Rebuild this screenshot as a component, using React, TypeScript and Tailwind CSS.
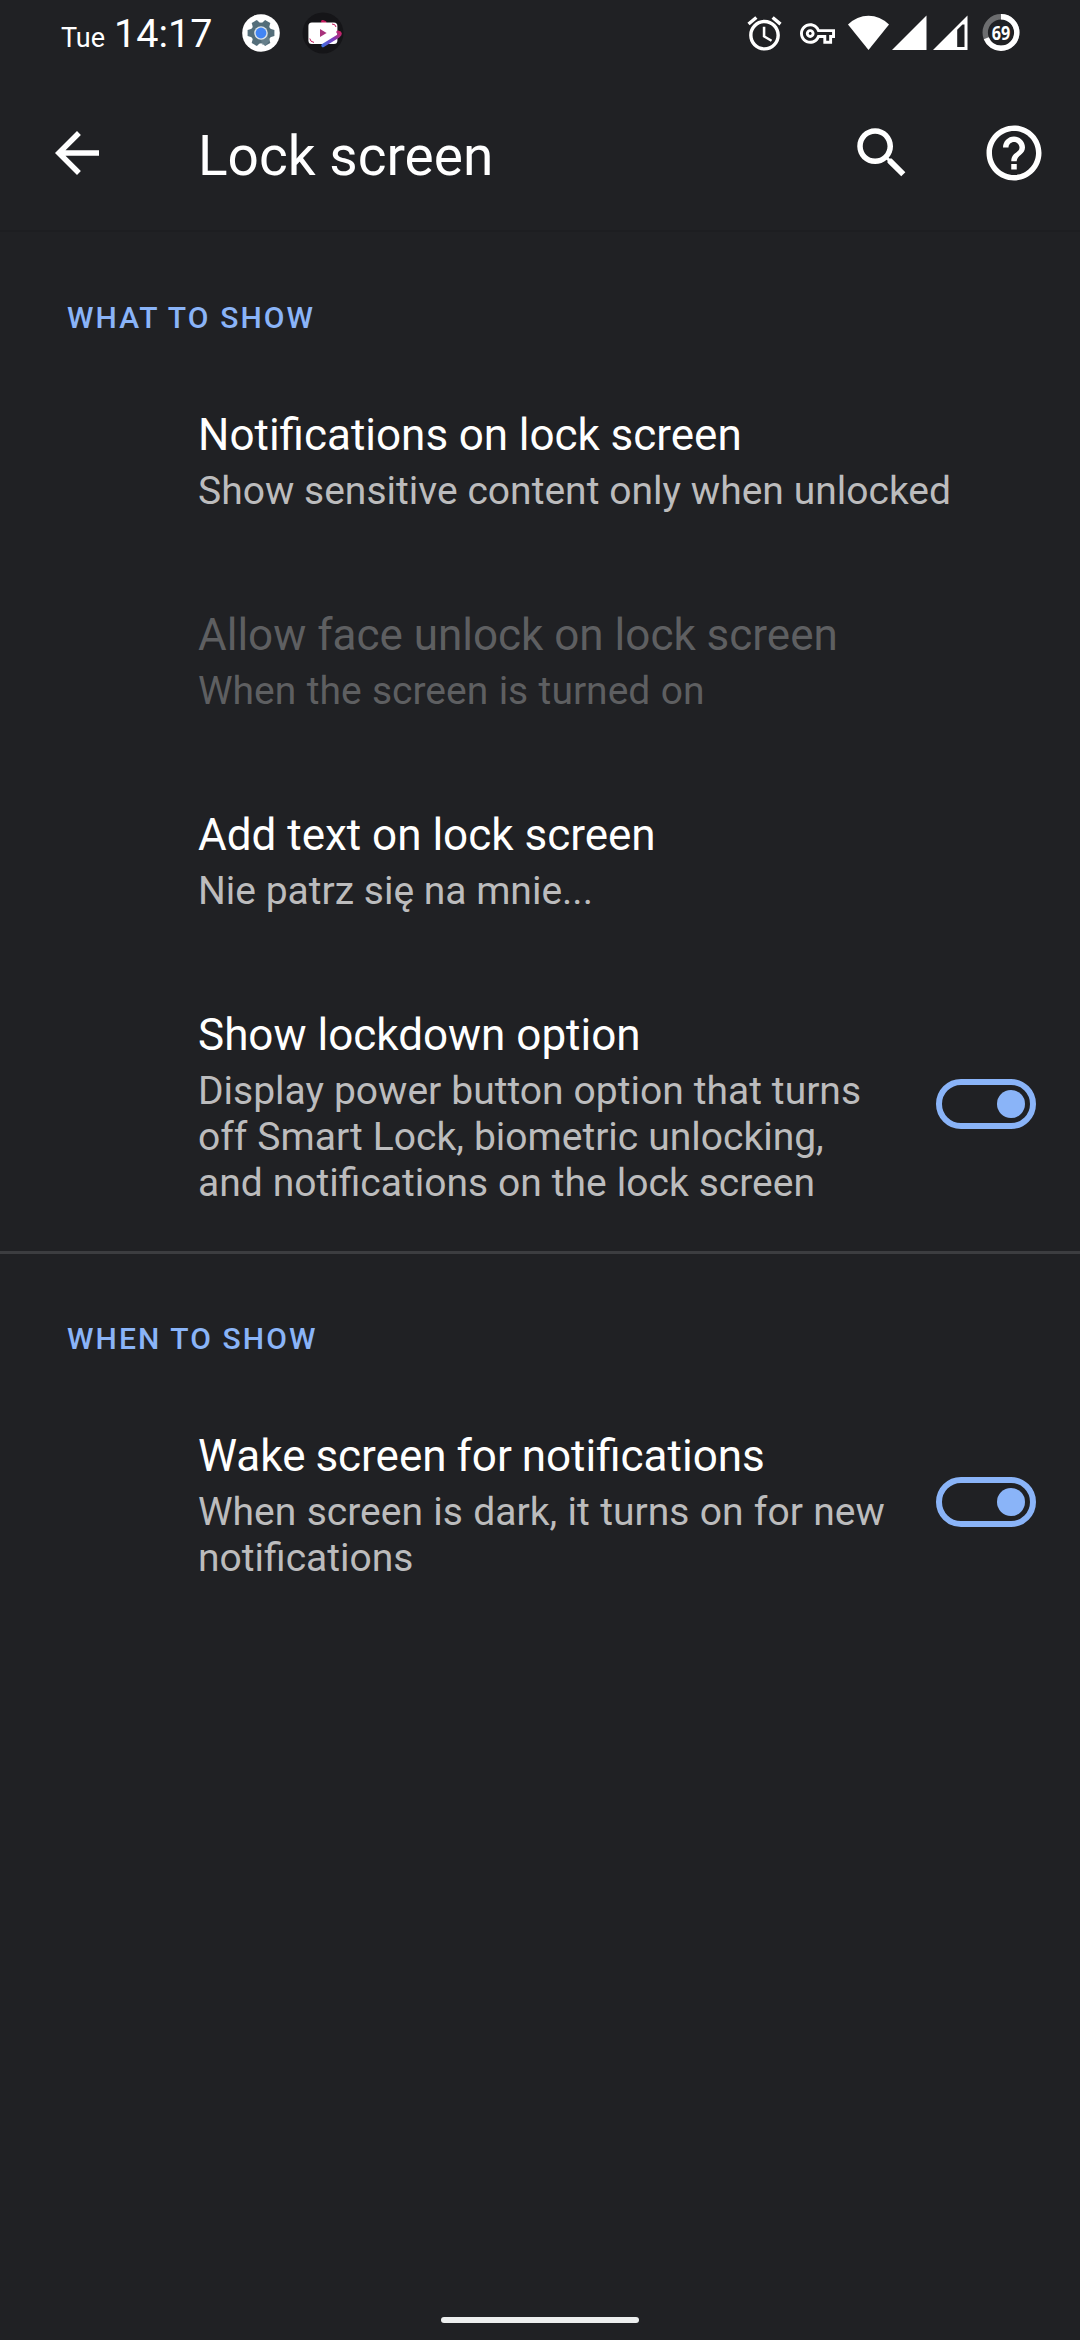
import React from 'react';

type RowProps = { title: string; lines: string[]; disabled?: boolean; toggle?: string; h: string; titleSpacing?: string; textSpacing?: string };

function Toggle({ offset }: { offset: string }) {
  return (
    <div className={`mr-[44px] ml-auto flex h-[50px] w-[100px] shrink-0 items-center justify-end rounded-full border-[6px] border-[#8ab4f8] pr-[5px] ${offset}`}>
      <div className="h-[28px] w-[28px] rounded-full bg-[#8ab4f8]" />
    </div>
  );
}

function Row({ title, lines, disabled, toggle, h, titleSpacing = '', textSpacing = '' }: RowProps) {
  return (
    <div className={`flex shrink-0 pl-[198px] ${h}`}>
      <div className="pt-[27px]">
        <div className={`whitespace-nowrap text-[44px] leading-[52px] ${titleSpacing} ${disabled ? 'text-[#5e5f61]' : 'text-white'}`}>{title}</div>
        <div className={`mt-[7px] whitespace-nowrap text-[39px] leading-[46px] ${textSpacing} ${disabled ? 'text-[#5e5f61]' : 'text-[#bcbcbd]'}`}>
          {lines.map((l) => <div key={l}>{l}</div>)}
        </div>
      </div>
      {toggle && <Toggle offset={toggle} />}
    </div>
  );
}

function Heading({ children }: { children: React.ReactNode }) {
  return (
    <div className="h-[150px] shrink-0 pt-[70px] pl-[67px] text-[30px] leading-[32px] font-medium tracking-[2.1px] text-[#8ab4f8]">
      {children}
    </div>
  );
}

function SettingsBadge() {
  return (
    <svg className="ml-[30px] h-[38px] w-[38px]" viewBox="0 0 38 38">
      <circle cx="19" cy="19" r="18.8" fill="#fff" />
      <g fill="#546e7a">
        <circle cx="19" cy="19" r="10.4" />
        {[30, 90, 150, 210, 270, 330].map((a) => (
          <path key={a} d="M14.6 10.5 L16 5.6 H22 L23.4 10.5Z" transform={`rotate(${a} 19 19)`} />
        ))}
      </g>
      <path d="M19 25 L20 31 L24 31 L28 26 L25 21Z" fill="#78909c" opacity=".5" />
      <circle cx="19" cy="19" r="6.8" fill="#dbe3e8" />
      <circle cx="19" cy="19" r="5.4" fill="#4285f4" />
    </svg>
  );
}

function VideoBadge() {
  return (
    <svg className="ml-[22px] h-[42px] w-[42px]" viewBox="0 0 42 42">
      <defs>
        <linearGradient id="sweep" x1="20" y1="34" x2="40" y2="18" gradientUnits="userSpaceOnUse">
          <stop offset="0" stopColor="#3f6fe0" />
          <stop offset="0.5" stopColor="#7a3fc0" />
          <stop offset="1" stopColor="#d81b50" />
        </linearGradient>
      </defs>
      <circle cx="21" cy="21" r="20.5" fill="#151518" />
      <path d="M20.5 9.5 L23 10.5" fill="none" stroke="#c2185b" strokeWidth="3" strokeLinecap="round" />
      <rect x="6.4" y="10.4" width="29" height="21.6" rx="3.5" fill="#fff" />
      <path d="M36 20.2 Q40 21 36.5 24 L21 33.5" fill="none" stroke="url(#sweep)" strokeWidth="3.4" strokeLinecap="round" strokeLinejoin="round" />
      <path d="M18 17 V25 L24.6 21Z" fill="#a8327c" />
      <path d="M7.8 26.5 Q8.2 30 12 30.4 M30 12 Q33.6 12 34 15" fill="none" stroke="#c2185b" strokeWidth="1" />
    </svg>
  );
}

function StatusBar() {
  return (
    <div className="flex h-[66px] shrink-0 items-center pl-[61px] text-white">
      <div className="flex w-[151px] items-baseline pt-[5px] whitespace-nowrap">
        <span className="text-[27px] leading-[46px]">Tue</span>
        <span className="ml-[9px] text-[39.5px] leading-[46px]">14:17</span>
      </div>
      <SettingsBadge />
      <VideoBadge />
      <svg className="ml-[400px] h-[41px] w-[41px]" viewBox="0 0 24 24" fill="#fff">
        <path d="M22 5.72l-4.6-3.86-1.29 1.53 4.6 3.86L22 5.72zM7.88 3.39L6.6 1.86 2 5.71l1.29 1.53 4.59-3.85zM12.5 8H11v6l4.75 2.85.75-1.23-4-2.37V8zM12 4c-4.97 0-9 4.03-9 9s4.02 9 9 9c4.97 0 9-4.03 9-9s-4.03-9-9-9zm0 16c-3.87 0-7-3.13-7-7s3.13-7 7-7 7 3.13 7 7-3.13 7-7 7z" />
      </svg>
      <svg className="ml-[15px] h-[35px] w-[35px]" viewBox="0 0 24 24" fill="#fff">
        <path d="M22 19h-6v-4h-2.68c-1.14 2.42-3.6 4-6.32 4-3.86 0-7-3.14-7-7s3.14-7 7-7c2.72 0 5.17 1.58 6.32 4H24v6h-2v4zm-4-2h2v-4h2v-2H11.94l-.23-.67C11.01 8.34 9.11 7 7 7c-2.76 0-5 2.24-5 5s2.24 5 5 5c2.11 0 4.01-1.34 4.71-3.33l.23-.67H18v4zM7 15c-1.65 0-3-1.35-3-3s1.35-3 3-3 3 1.35 3 3-1.35 3-3 3zm0-4c-.55 0-1 .45-1 1s.45 1 1 1 1-.45 1-1-.45-1-1-1z" />
      </svg>
      <svg className="ml-[13px] h-[36px] w-[41px]" viewBox="0 0 41 36" fill="#fff">
        <path d="M20.5 35 L0 9.6 Q9 .8 20.5 .8 T41 9.6Z" />
      </svg>
      <svg className="ml-[3px] h-[36px] w-[35px]" viewBox="0 0 35 36" fill="#fff">
        <path d="M0 35 L34.5 .5 V35Z" />
      </svg>
      <svg className="ml-[6px] h-[36px] w-[35px]" viewBox="0 0 35 36" fill="#fff">
        <path fillRule="evenodd" d="M0 35 L34.5 .5 V35Z M24.2 14.8 V32 H31.5 V9.5 H29.5Z" />
      </svg>
      <svg className="ml-[14px] h-[38px] w-[38px]" viewBox="0 0 38 38">
        <circle cx="19" cy="18.5" r="15.8" fill="none" stroke="#6c6d6f" strokeWidth="5.4" />
        <circle cx="19" cy="18.5" r="15.8" fill="none" stroke="#fff" strokeWidth="5.4" pathLength="100" strokeDasharray="69 31" transform="rotate(-90 19 18.5)" />
        <text x="19" y="25.5" textAnchor="middle" textLength="18.5" lengthAdjust="spacingAndGlyphs" fontSize="19" fontWeight="700" fill="#fff" className="font-['Noto_Sans',sans-serif]">69</text>
      </svg>
    </div>
  );
}

function AppBar() {
  return (
    <div className="flex h-[166px] shrink-0 items-start border-b-[2px] border-[#1d1e21] pt-[54px] pl-[44px] text-white">
      <svg className="h-[66px] w-[66px]" viewBox="0 0 24 24" fill="#fff">
        <path d="M20 11H7.83l5.59-5.59L12 4l-8 8 8 8 1.41-1.41L7.83 13H20v-2z" />
      </svg>
      <div className="mt-[4px] ml-[88px] w-[651px] text-[55px] leading-[64px] whitespace-nowrap">Lock screen</div>
      <svg className="h-[66px] w-[66px] shrink-0" viewBox="0 0 24 24" fill="#fff">
        <path d="M15.5 14h-.79l-.28-.27C15.41 12.59 16 11.11 16 9.5 16 5.91 13.09 3 9.5 3S3 5.91 3 9.5 5.91 16 9.5 16c1.61 0 3.09-.59 4.23-1.57l.27.28v.79l5 4.99L20.49 19l-4.99-5zm-6 0C7.01 14 5 11.99 5 9.5S7.01 5 9.5 5 14 7.01 14 9.5 11.99 14 9.5 14z" />
      </svg>
      <svg className="ml-[66px] h-[66px] w-[66px] shrink-0" viewBox="0 0 24 24" fill="#fff">
        <path d="M11 18h2v-2h-2v2zm1-16C6.48 2 2 6.48 2 12s4.48 10 10 10 10-4.48 10-10S17.52 2 12 2zm0 18c-4.41 0-8-3.59-8-8s3.59-8 8-8 8 3.59 8 8-3.59 8-8 8zm0-14c-2.21 0-4 1.79-4 4h2c0-1.1.9-2 2-2s2 .9 2 2c0 2-3 1.75-3 5h2c0-2.25 3-2.5 3-5 0-2.21-1.79-4-4-4z" />
      </svg>
    </div>
  );
}

export default function App() {
  return (
    <div className="flex h-[2340px] w-[1080px] flex-col overflow-hidden bg-[#202124] font-['Roboto',sans-serif]">
      <StatusBar />
      <AppBar />
      <Heading>WHAT TO SHOW</Heading>
      <Row h="h-[200px]" title="Notifications on lock screen" titleSpacing="[word-spacing:-0.3px]" lines={['Show sensitive content only when unlocked']} textSpacing="[word-spacing:0.2px]" />
      <Row h="h-[200px]" title="Allow face unlock on lock screen" lines={['When the screen is turned on']} textSpacing="[word-spacing:0.7px]" disabled />
      <Row h="h-[200px]" title="Add text on lock screen" lines={['Nie patrz się na mnie...']} />
      <Row h="h-[269px]" title="Show lockdown option" lines={['Display power button option that turns', 'off Smart Lock, biometric unlocking,', 'and notifications on the lock screen']} textSpacing="[word-spacing:0.3px]" toggle="mt-[97px]" />
      <div className="-mb-px h-[3px] shrink-0 bg-[#3c3d40]" />
      <Heading>WHEN TO SHOW</Heading>
      <Row h="h-[246px]" title="Wake screen for notifications" titleSpacing="[word-spacing:-1px]" lines={['When screen is dark, it turns on for new', 'notifications']} textSpacing="[word-spacing:0.7px]" toggle="mt-[74px]" />
      <div className="mx-auto mt-auto mb-[17px] h-[6px] w-[198px] shrink-0 rounded-full bg-[#eceeee]" />
    </div>
  );
}
